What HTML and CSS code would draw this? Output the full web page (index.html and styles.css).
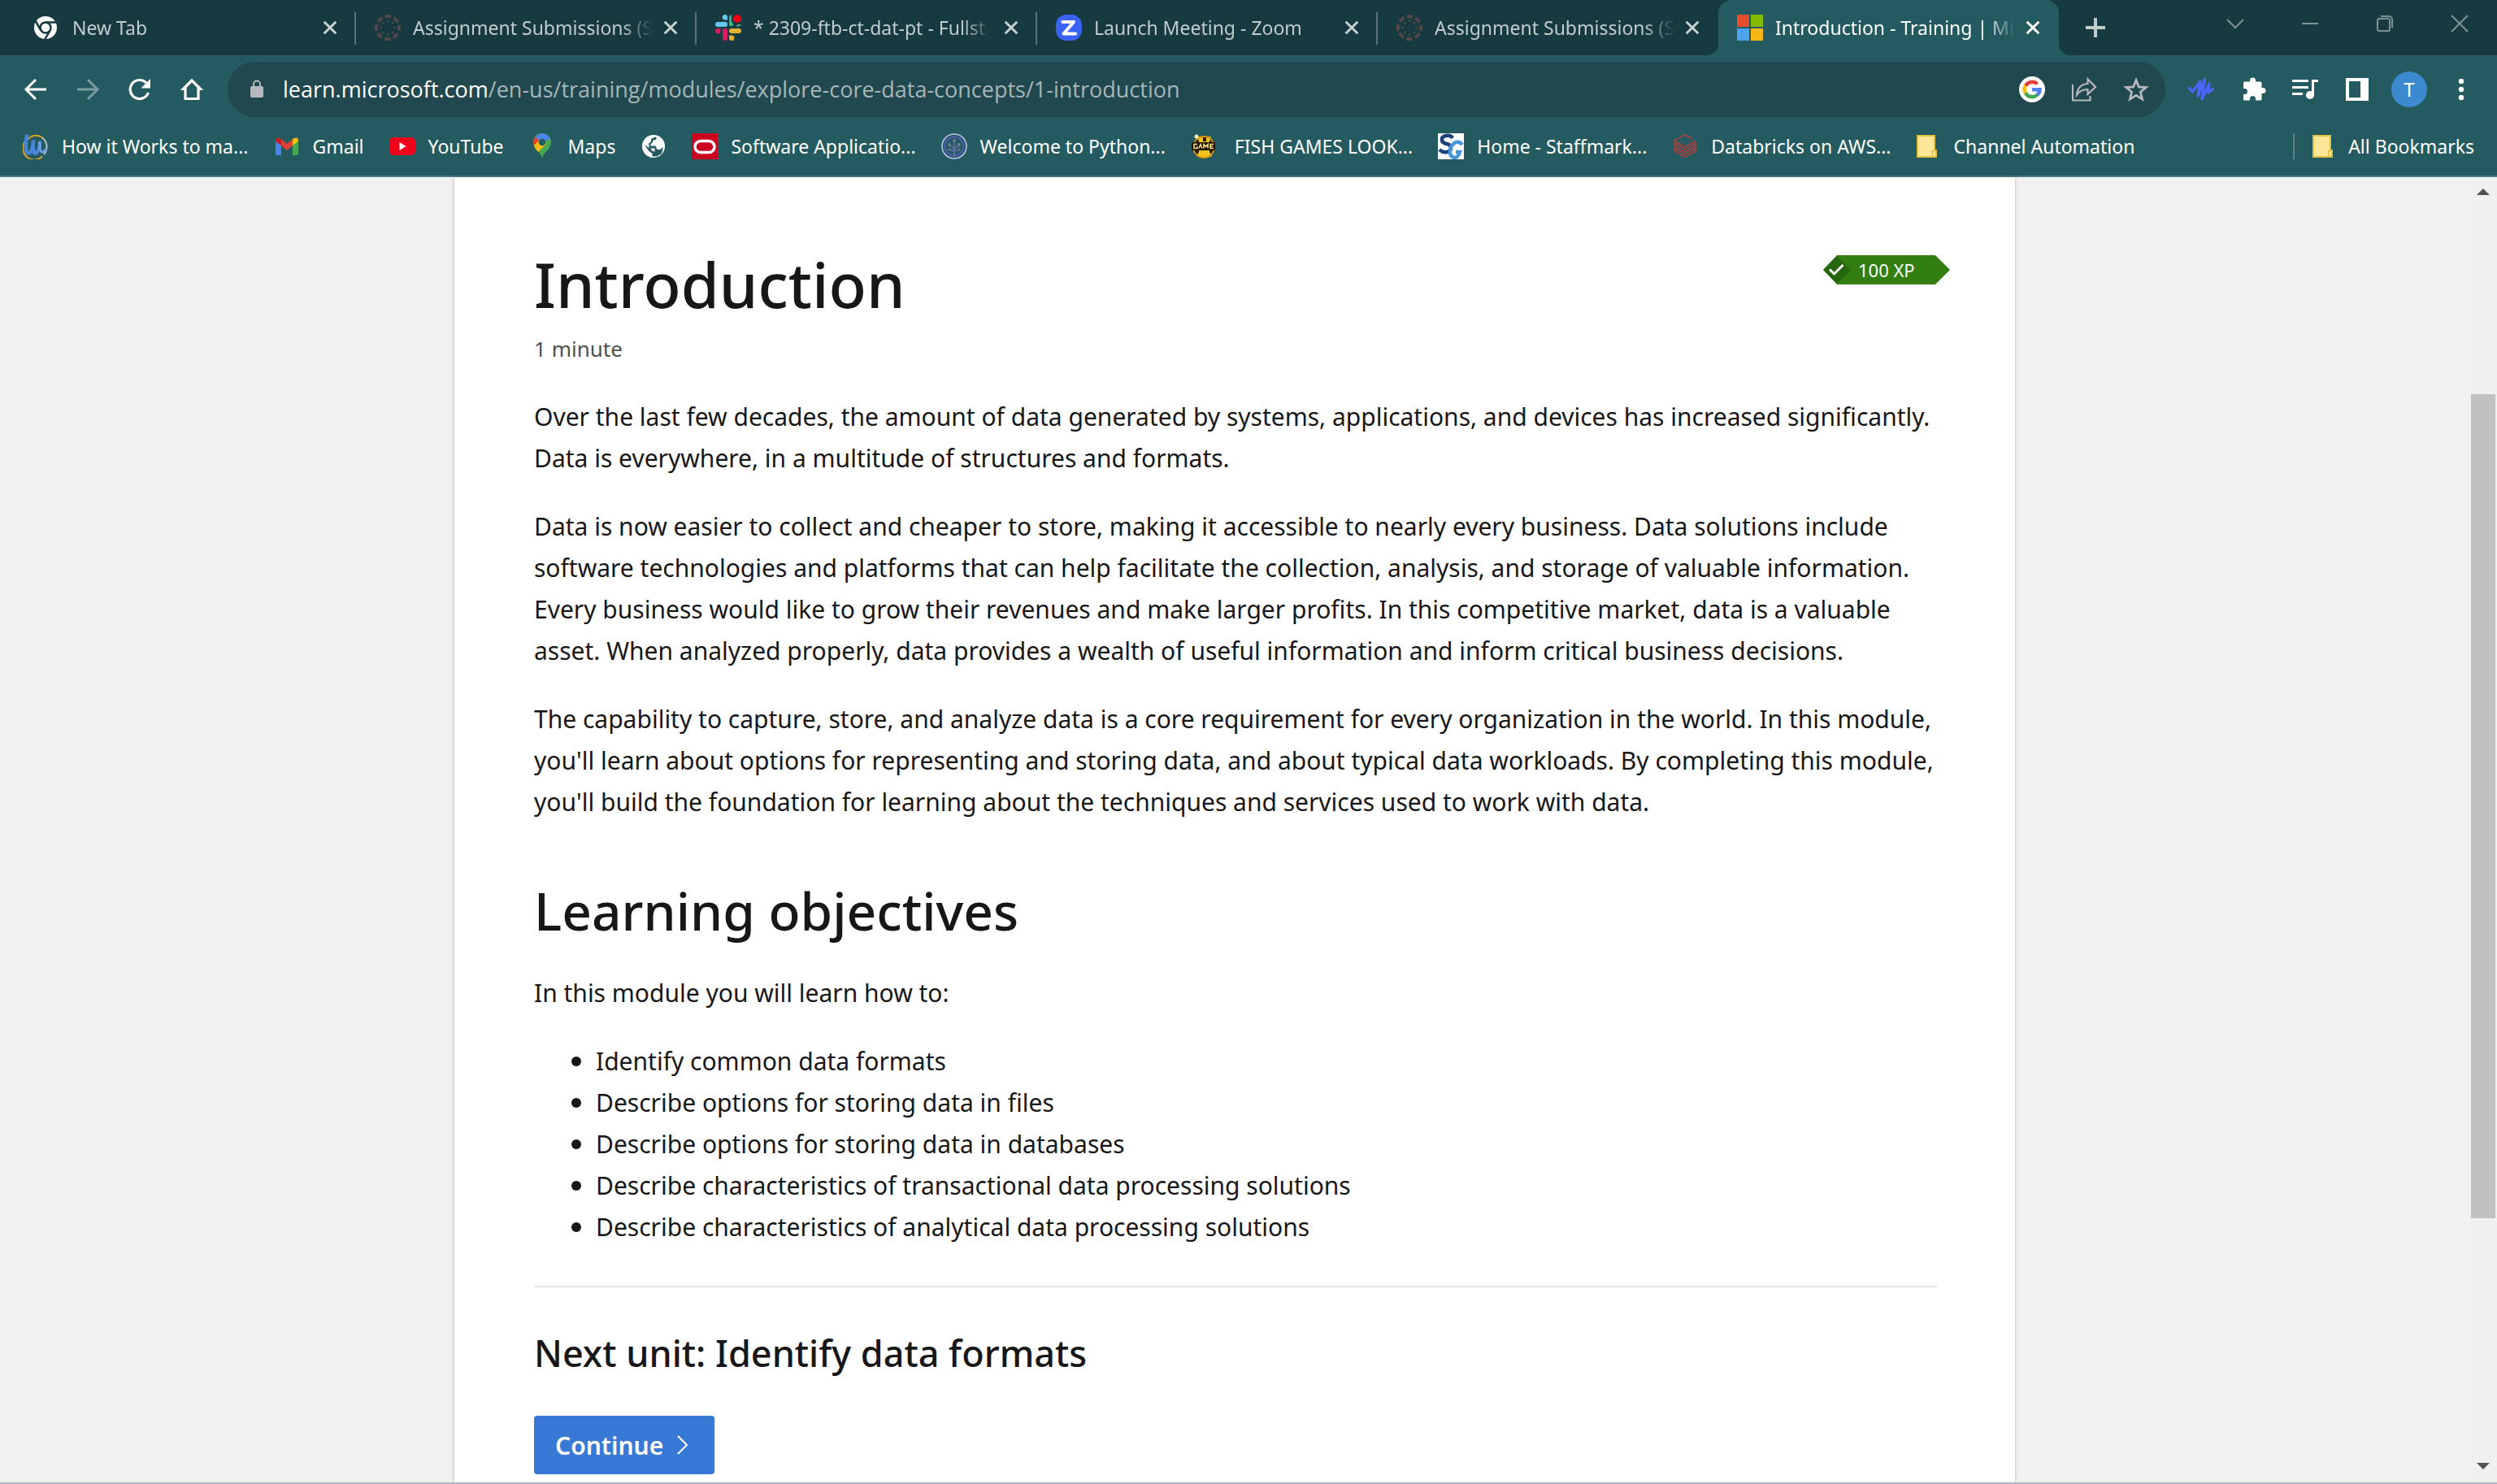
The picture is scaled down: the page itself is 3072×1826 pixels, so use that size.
FILE: index.html
```html
<!DOCTYPE html>
<html lang="en">
<head>
<meta charset="utf-8">
<title>Introduction - Training | Microsoft Learn</title>
<link rel="stylesheet" href="styles.css">
</head>
<body>
<svg class="defs" aria-hidden="true">
  <defs>
    <symbol id="close" viewBox="0 0 16 16"><path d="M1.5 1.5l13 13M14.5 1.5l-13 13" fill="none" stroke="currentColor" stroke-width="2.6"/></symbol>
    <symbol id="canvas" viewBox="0 0 32 32">
      <circle cx="16" cy="16" r="14" fill="none" stroke="#54484a" stroke-width="4" stroke-dasharray="7.4 3.6" stroke-dashoffset="3.7"/>
      <g fill="#54484a"><circle cx="16" cy="7.5" r="1.3"/><circle cx="22" cy="10" r="1.3"/><circle cx="24.500" cy="16" r="1.3"/><circle cx="22" cy="22" r="1.3"/><circle cx="16" cy="24.500" r="1.3"/><circle cx="10" cy="22" r="1.3"/><circle cx="7.5" cy="16" r="1.3"/><circle cx="10" cy="10" r="1.3"/></g>
    </symbol>
    <symbol id="folder" viewBox="0 0 30 28"><path d="M1 1h21v18h2v8H1z" fill="#fce697" stroke="#e3bf3f" stroke-width="2"/><path d="M19.500 26v-6.500h4" fill="none" stroke="#e3bf3f" stroke-width="1.500"/></symbol>
  </defs>
</svg>

<header class="browser">
  <div class="tabstrip">
    <div class="tab">
      <svg class="fav" viewBox="0 0 32 32"><circle cx="14" cy="16" r="14" fill="#fff"/><circle cx="14" cy="16" r="6.500" fill="#fff" stroke="#173940" stroke-width="2.500"/><path d="M14 9.500h14M8.500 19.500L1.500 7.500M19.500 19.500L13 31" stroke="#173940" stroke-width="2.500" fill="none"/></svg>
      <span class="title">New Tab</span>
      <button class="x" aria-label="Close tab"><svg><use href="#close"/></svg></button>
    </div>
    <div class="tab">
      <svg class="fav"><use href="#canvas"/></svg>
      <span class="title">Assignment Submissions (S</span>
      <button class="x" aria-label="Close tab"><svg><use href="#close"/></svg></button>
    </div>
    <div class="tab">
      <svg class="fav" viewBox="0 0 32 32"><g fill="#63c7ee"><rect x="0" y="9" width="15" height="6" rx="3"/><path d="M12 0a3 3 0 0 1 3 3v3.500h-3A3.200 3.200 0 0 1 12 0z"/></g><g fill="#3bb281"><path d="M17 3a4 4 0 0 1 3-3v8l2.500 4v0a3 3 0 0 1-5.500 1z"/><path d="M25 14.500c2 0 6 .5 7-2.500h-4z"/></g><g fill="#dc1a5f"><rect x="9" y="17" width="6" height="15" rx="3"/><path d="M6.500 17v3A3.200 3.200 0 1 1 3.300 17z"/></g><g fill="#e6b230"><rect x="17" y="17" width="15" height="6" rx="3"/><path d="M17 25.500h3.200A3.200 3.200 0 1 1 17 28.700z"/></g><circle cx="27" cy="5" r="5" fill="#eb0014"/></svg>
      <span class="title">* 2309-ftb-ct-dat-pt - Fullst</span>
      <button class="x" aria-label="Close tab"><svg><use href="#close"/></svg></button>
    </div>
    <div class="tab">
      <svg class="fav" viewBox="0 0 32 32"><rect width="32" height="32" rx="13" fill="#3b63f8"/><path d="M8.500 9H22L9.500 23.500H24" fill="none" stroke="#fff" stroke-width="4" stroke-linejoin="round" stroke-linecap="round"/></svg>
      <span class="title">Launch Meeting - Zoom</span>
      <button class="x" aria-label="Close tab"><svg><use href="#close"/></svg></button>
    </div>
    <div class="tab last">
      <svg class="fav"><use href="#canvas"/></svg>
      <span class="title">Assignment Submissions (S</span>
      <button class="x" aria-label="Close tab"><svg><use href="#close"/></svg></button>
    </div>
    <div class="tab active">
      <svg class="fav" viewBox="0 0 32 32"><path d="M0 0h15v15H0z" fill="#e34c2c"/><path d="M17 0h15v15H17z" fill="#83b900"/><path d="M0 17h15v15H0z" fill="#4ba3ee"/><path d="M17 17h15v15H17z" fill="#f5b616"/></svg>
      <span class="title">Introduction - Training | Mi</span>
      <button class="x" aria-label="Close tab"><svg><use href="#close"/></svg></button>
    </div>
    <button class="newtab" aria-label="New tab"><svg viewBox="0 0 24 24"><path d="M12 0v24M0 12h24" stroke="currentColor" stroke-width="4"/></svg></button>
    <div class="window-controls">
      <button aria-label="Search tabs"><svg viewBox="0 0 20 20"><path d="M0 5l10 10L20 5"/></svg></button>
      <button aria-label="Minimize"><svg viewBox="0 0 20 20"><path d="M0 10h20"/></svg></button>
      <button aria-label="Restore"><svg viewBox="0 0 20 20"><rect x="1" y="4" width="15" height="15" rx="2"/><path d="M5 1h10a4 4 0 0 1 4 4v10"/></svg></button>
      <button aria-label="Close window"><svg viewBox="0 0 20 20"><path d="M0 0l20 20M20 0L0 20"/></svg></button>
    </div>
  </div>

  <div class="toolbar">
    <button class="tool" aria-label="Back"><svg viewBox="0 0 32 32"><path d="M29 16H5M16 4L4 16l12 12" fill="none" stroke="#fff" stroke-width="3"/></svg></button>
    <button class="tool" aria-label="Forward"><svg viewBox="0 0 32 32"><path d="M3 16h24M16 4l12 12-12 12" fill="none" stroke="#7c9da0" stroke-width="3"/></svg></button>
    <button class="tool" aria-label="Reload"><svg viewBox="0 0 32 32"><path d="M26.500 20A11.500 11.500 0 1 1 24 8" fill="none" stroke="#fff" stroke-width="3.200"/><path d="M29 3v11.500H17.500z" fill="#fff"/></svg></button>
    <button class="tool" aria-label="Home"><svg viewBox="0 0 32 32"><path d="M16 5L5.500 15.500H8V27.500H24V15.500H26.500z" fill="none" stroke="#fff" stroke-width="3.200"/></svg></button>
    <div class="omnibox">
      <svg class="lock" viewBox="0 0 18 24"><rect x="1" y="8" width="16" height="14" rx="2" fill="#b5b8bc"/><path d="M5 9V5.500a4 4 0 0 1 8 0V9" fill="none" stroke="#b5b8bc" stroke-width="2"/></svg>
      <p class="url"><strong>learn.microsoft.com</strong>/en-us/training/modules/explore-core-data-concepts/1-introduction</p>
      <button class="tool" aria-label="Google"><svg viewBox="0 0 32 32"><circle cx="16" cy="16" r="16" fill="#fff"/><g fill="none" stroke-width="4.500"><path d="M8 11.500a9.500 9.500 0 0 1 14.500-2.200" stroke="#e04134"/><path d="M8 20.800a9.500 9.500 0 0 1 0-9.600" stroke="#f7bc10"/><path d="M22.500 22.700A9.500 9.500 0 0 1 8 20.500" stroke="#46a850"/><path d="M16 16.300h9.500a9.500 9.500 0 0 1-3.200 6.600" stroke="#4b83f0"/></g></svg></button>
      <button class="tool" aria-label="Share"><svg viewBox="0 0 32 32"><path d="M2 10v19.500h21.500V24" fill="none" stroke="#b5b8bc" stroke-width="2.200"/><path d="M7 22.500C8 13 13 9.500 20.500 9V3.500L30 13l-9.500 9v-6C14.500 16 10.500 17.500 7 22.500z" fill="none" stroke="#b5b8bc" stroke-width="2.200"/></svg></button>
      <button class="tool" aria-label="Bookmark this tab"><svg viewBox="0 0 32 32"><path d="M16 4.500l3.300 8.300 9 .7-6.900 5.800 2.200 8.700L16 23.300 8.400 28l2.200-8.700-6.900-5.800 9-.7z" fill="none" stroke="#b5b8bc" stroke-width="2.800"/></svg></button>
    </div>
    <button class="tool" aria-label="Audio extension"><svg viewBox="0 0 32 32"><path d="M1.500 14.500L5.500 19 15 6 12 24.500 20.500 3.500 17 28 26 9 24.500 20 30.500 15.500" fill="none" stroke="#4d63fb" stroke-width="3.200" stroke-linejoin="round" stroke-linecap="round"/></svg></button>
    <button class="tool" aria-label="Extensions"><svg viewBox="0 0 32 32"><path d="M4 8q0-1.500 1.500-1.500H12V5a3.500 3.500 0 0 1 7 0v1.500h6q1.500 0 1.500 1.500v6h1.500a3.500 3.500 0 0 1 0 7h-1.500v7q0 1.500-1.500 1.500h-6V27.500a3.500 3.500 0 0 0-7 0v2H5.500Q4 29.500 4 28v-6h1.500a3.500 3.500 0 0 0 0-7H4z" fill="#fff"/></svg></button>
    <button class="tool" aria-label="Media controls"><svg viewBox="0 0 32 32"><path d="M0 5.500h20M0 13.500h20M0 21.500h13" stroke="#fff" stroke-width="3"/><path d="M32 5.500h-6.500V23" fill="none" stroke="#fff" stroke-width="3"/><circle cx="22" cy="23" r="5" fill="#fff"/></svg></button>
    <button class="tool" aria-label="Side panel"><svg viewBox="0 0 32 32"><path d="M2 2h28v28H2zM6 6v20h14V6z" fill="#fff" fill-rule="evenodd"/></svg></button>
    <button class="avatar" aria-label="Profile">T</button>
    <button class="tool" aria-label="Menu"><svg viewBox="0 0 32 32"><g fill="#fff"><circle cx="16" cy="6" r="3.200"/><circle cx="16" cy="16" r="3.200"/><circle cx="16" cy="26" r="3.200"/></g></svg></button>
  </div>

  <nav class="bookmarks" aria-label="Bookmarks">
    <a href="#"><svg viewBox="0 0 32 32"><path d="M9 5.500A14 14 0 1 0 24 28.500M9 5Q17 0 25 6" fill="none" stroke="#d9a11f" stroke-width="2"/><path d="M24 5.500A14 14 0 0 1 26 26" fill="none" stroke="#b9bfc5" stroke-width="2"/><path d="M5.500 1.500C3 12 3 24 6.500 24.500S13 17 13 8.500C12 16 12.500 24 15.500 24.500S21 17 21 10" fill="none" stroke="#4a86d8" stroke-width="4.500"/><path d="M21 10C20.500 18 21.500 23 24 23q3 0 5-4" fill="none" stroke="#6ba0df" stroke-width="3"/></svg>How it Works to ma...</a>
    <a href="#"><svg viewBox="0 0 32 32"><path d="M2 9v16q0 2 2 2h5V14z" fill="#4b83f0"/><path d="M30 9v16q0 2-2 2h-5V14z" fill="#46a850"/><path d="M9 7l7 6 7-6v8l-7 6-7-6z" fill="#e04134"/><path d="M2 9q0-5 5-3l2 1.500V15l-7-5z" fill="#bf1f20"/><path d="M30 9q0-5-5-3l-2 1.500V15l7-5z" fill="#f7bc10"/></svg>Gmail</a>
    <a href="#"><svg viewBox="0 0 32 32"><rect y="5" width="32" height="22" rx="5" fill="#f1001b"/><path d="M12.500 11v10l8-5z" fill="#fff"/></svg>YouTube</a>
    <a href="#"><svg viewBox="0 0 32 32"><path d="M16 31C15 23 5 20 5 11a11 11 0 0 1 22 0c0 9-10 12-11 20z" fill="#46a850"/><path d="M6 15.500a11 11 0 0 1 1.500-11L13 9z" fill="#e04134"/><path d="M7.500 4.500A11 11 0 0 1 26 6.500L16 11z" fill="#4b83f0"/><path d="M6 15q1 4 5 8L21 13l-7-6z" fill="#f7bc10"/><circle cx="16" cy="11" r="4.200" fill="#245b60"/></svg>Maps</a>
    <a href="#" aria-label="Site"><svg viewBox="0 0 32 32"><circle cx="16" cy="16" r="14" fill="#fff"/><path d="M18.500 4.500L20 5.500Q19 9 15.500 8.500L14.500 12 12.500 13v2.500h6L20.500 20H24l4-3-2 8-6 3.500h-5.500V25L10.500 22 5 14.500 13 19l1 2.500 3.500 1v-4H11L10 12.500 12.500 11 13.500 6.500z" fill="#245b60"/></svg></a>
    <a href="#"><svg viewBox="0 0 32 32"><path d="M0 0h32v32H0z" fill="#cb0020"/><rect x="4" y="9.500" width="24" height="14" rx="7" fill="none" stroke="#fff" stroke-width="3.500"/></svg>Software Applicatio...</a>
    <a href="#"><svg viewBox="0 0 32 32"><circle cx="16" cy="16" r="15" fill="none" stroke="#bfc3ee" stroke-width="1.500"/><circle cx="16" cy="16" r="11.500" fill="none" stroke="#5f5cc8" stroke-width="1.500"/><path d="M16 29V10M16 19l-5-4M16 19l5-4M10 20l6 2 6-2" stroke="#6b6fb0" stroke-width="1.600" fill="none"/><g fill="#6b7f98"><circle cx="16" cy="9" r="2"/><circle cx="10" cy="14" r="2"/><circle cx="22" cy="14" r="2"/><circle cx="10" cy="20" r="1.600"/><circle cx="22" cy="20" r="1.600"/></g></svg>Welcome to Python...</a>
    <a href="#"><svg viewBox="0 0 32 32"><circle cx="16" cy="17" r="14" fill="#2a1b08"/><path d="M8 4h7v6h4V4h6l-2 6v13l3 5q-10 5-19 0l3-5V10z" fill="#f2c318"/><circle cx="16" cy="17" r="13" fill="none" stroke="#d99c12" stroke-width="1.800"/><rect x="1" y="11" width="29" height="10" rx="2" fill="#1d1206"/><path d="M8 13.500H4v5h4V16M10 18.500l2-5 2 5M16 18.500v-5l2.500 3 2.500-3v5M28 13.500h-4v5h4M24 16h3" fill="none" stroke="#f6e27a" stroke-width="1.500"/><circle cx="7" cy="4" r="2.500" fill="#f9f0c0"/></svg><span class="caption">FISH GAMES LOOK...</span></a>
    <a href="#"><svg viewBox="0 0 32 32"><path d="M0 0h32v32H0z" fill="#fff"/><path d="M18 6Q16 2 10 3T5 9q1 3 6 4t5 5-5 5-9-3" fill="none" stroke="#1b3f7b" stroke-width="4.500"/><path d="M30 14q-3-4-8-3-6 3-7 10t5 9q5 0 7-7h-5" fill="none" stroke="#4697db" stroke-width="4.500"/></svg>Home - Staffmark...</a>
    <a href="#"><svg viewBox="0 0 32 32"><path d="M25 6.500L16 2 3 9l13 7.500L29 9M3 12v3.500l13 7.500 13-7.500V12l-13 7.500zM3 18.500V22l13 7.500L29 22v-3.500L16 26z" fill="none" stroke="#c93a3a" stroke-width="1.400"/></svg>Databricks on AWS...</a>
    <a href="#"><svg class="folder"><use href="#folder"/></svg>Channel Automation</a>
    <a href="#" class="all"><svg class="folder"><use href="#folder"/></svg>All Bookmarks</a>
  </nav>
</header>

<div class="viewport">
  <main class="card">
    <div class="heading">
      <h1>Introduction</h1>
      <div class="xp">
        <svg viewBox="0 0 34 36"><path d="M0 18L17 1l17 17-17 17z" fill="#28650f"/><path d="M8 17.500l5.500 5.500L24.500 12" fill="none" stroke="#fff" stroke-width="3"/></svg>
        <span>100 XP</span>
      </div>
    </div>
    <p class="time">1 minute</p>
    <p>Over the last few decades, the amount of data generated by systems, applications, and devices has increased significantly. Data is everywhere, in a multitude of structures and formats.</p>
    <p>Data is now easier to collect and cheaper to store, making it accessible to nearly every business. Data solutions include software technologies and platforms that can help facilitate the collection, analysis, and storage of valuable information. Every business would like to grow their revenues and make larger profits. In this competitive market, data is a valuable asset. When analyzed properly, data provides a wealth of useful information and inform critical business decisions.</p>
    <p>The capability to capture, store, and analyze data is a core requirement for every organization in the world. In this module, you'll learn about options for representing and storing data, and about typical data workloads. By completing this module, you'll build the foundation for learning about the techniques and services used to work with data.</p>
    <h2>Learning objectives</h2>
    <p>In this module you will learn how to:</p>
    <ul>
      <li>Identify common data formats</li>
      <li>Describe options for storing data in files</li>
      <li>Describe options for storing data in databases</li>
      <li>Describe characteristics of transactional data processing solutions</li>
      <li>Describe characteristics of analytical data processing solutions</li>
    </ul>
    <hr>
    <h3>Next unit: Identify data formats</h3>
    <a class="continue" href="#">Continue <svg viewBox="0 0 14 24"><path d="M1 1l11 11L1 23" fill="none" stroke="#fff" stroke-width="2"/></svg></a>
  </main>
  <div class="scrollbar" aria-hidden="true">
    <svg viewBox="0 0 16 8"><path d="M0 8l8-8 8 8z" fill="#505050"/></svg>
    <div class="track"><div class="thumb"></div></div>
    <svg viewBox="0 0 16 8"><path d="M0 0l8 8 8-8z" fill="#505050"/></svg>
  </div>
</div>
</body>
</html>
```
FILE: styles.css
```css
* { box-sizing: border-box; margin: 0; padding: 0; }

body {
  display: flex;
  flex-direction: column;
  height: 100vh;
  overflow: hidden;
  font-family: "Noto Sans", "Open Sans", sans-serif;
  font-size: 30px;
  line-height: 51px;
  color: #171717;
  background: #f1f1f1;
  border-bottom: 2px solid #b0b2c6;
}

button { border: 0; background: none; font: inherit; color: inherit; }
a { color: inherit; text-decoration: none; }
svg { display: block; flex: none; }
.defs { position: absolute; width: 0; height: 0; }

.browser {
  flex: none;
  background: #245b60;
  border-bottom: 2px solid #4a8085;
  color: #fff;
  font-size: 23px;
  line-height: 32px;
}

/* Tab strip */
.tabstrip {
  display: flex;
  height: 68px;
  padding-left: 19px;
  background: #173940;
}
.tab {
  position: relative;
  display: flex;
  align-items: center;
  flex: 0 1 419px;
  min-width: 0;
  padding: 0 23px;
  color: #c0cccd;
}
.tab::after {
  content: "";
  position: absolute;
  right: 0;
  top: 15px;
  width: 2px;
  height: 40px;
  background: #5a7478;
}
.tab.last::after { display: none; }
.fav { width: 32px; height: 32px; }
.title {
  flex: 1;
  min-width: 0;
  margin: 0 12px 0 15px;
  overflow: hidden;
  white-space: nowrap;
  mask-image: linear-gradient(to left, transparent, #000 40px);
}
.x { width: 18px; height: 18px; color: #c8d2d3; }
.x svg { width: 18px; height: 18px; }
.tab.active { background: #245b60; color: #fff; border-radius: 16px 16px 0 0; }
.tab.active .x { color: #fff; }
.tab.active::before,
.tab.active::after {
  content: "";
  position: absolute;
  top: auto;
  bottom: 0;
  width: 16px;
  height: 16px;
}
.tab.active::before { left: -16px; background: radial-gradient(circle at 0 0, transparent 16px, #245b60 17px); }
.tab.active::after { right: -16px; background: radial-gradient(circle at 100% 0, transparent 16px, #245b60 17px); }
.newtab { width: 24px; margin-left: 33px; color: #c0cccd; }
.newtab svg { width: 24px; height: 24px; }
.window-controls { display: flex; height: 58px; margin-left: auto; }
.window-controls button { display: grid; place-items: center; width: 92px; }
.window-controls svg { width: 20px; height: 20px; fill: none; stroke: #7f9497; stroke-width: 2; overflow: visible; }

/* Toolbar */
.toolbar { display: flex; align-items: center; height: 84px; padding: 0 12px; }
.tool { display: grid; place-items: center; flex: none; width: 64px; height: 64px; }
.tool svg { width: 32px; height: 32px; }
.omnibox {
  display: flex;
  align-items: center;
  flex: 1;
  min-width: 0;
  height: 68px;
  margin: 0 12px;
  padding: 0 4px 0 27px;
  border-radius: 34px;
  background: #20484e;
}
.lock { width: 18px; height: 24px; }
.url {
  flex: 1;
  min-width: 0;
  margin-left: 23px;
  overflow: hidden;
  white-space: nowrap;
  font-family: "Open Sans", sans-serif;
  font-size: 27px;
  line-height: 40px;
  color: #a6b6b8;
}
.url strong { font-weight: 400; color: #fff; }
.avatar {
  flex: none;
  width: 44px;
  height: 44px;
  margin: 0 10px;
  border-radius: 50%;
  background: #3c89d0;
  font-size: 24px;
}

/* Bookmarks bar */
.bookmarks { display: flex; align-items: center; gap: 31px; height: 56px; padding: 0 28px; margin-bottom: 8px; }
.bookmarks a { display: flex; align-items: center; gap: 16px; height: 32px; white-space: nowrap; }
.bookmarks svg { width: 32px; height: 32px; }
.bookmarks .folder { width: 30px; height: 28px; }
.bookmarks .caption { padding-left: 6px; }
.bookmarks .all { gap: 14px; margin-left: auto; padding-left: 22px; border-left: 2px solid #5b8488; }

/* Page */
.viewport { display: flex; flex: 1; min-height: 0; }
.card {
  width: 1920px;
  max-width: 100%;
  margin: 0 auto;
  padding: 84px 96px 10px 98px;
  background: #fff;
  box-shadow: 0 0 4px rgba(0, 0, 0, 0.25);
}
.heading { display: flex; justify-content: space-between; align-items: flex-start; margin-right: -16px; }
h1 { font-size: 76px; line-height: 96px; font-weight: 500; }
h2 { margin: 69px 0 35px; font-size: 64px; line-height: 80px; font-weight: 500; }
h3 { margin: 51px 0 47px; font-size: 45px; line-height: 60px; font-weight: 500; }
.card p + p { margin-top: 33px; }
.card .time { margin-top: 13px; font-size: 26px; line-height: 36px; color: #505050; }
.card .time + p { margin-top: 40px; }
.xp {
  display: flex;
  align-items: center;
  gap: 9px;
  width: 156px;
  height: 36px;
  margin-top: 12px;
  background: #327e10;
  clip-path: polygon(0 50%, 17px 0, calc(100% - 18px) 0, 100% 50%, calc(100% - 18px) 100%, 17px 100%);
  color: #fff;
  font-size: 22px;
  line-height: 36px;
}
.xp svg { width: 34px; height: 36px; }
ul { margin-top: 33px; padding-left: 76px; list-style: none; }
li { position: relative; }
li::before {
  content: "";
  position: absolute;
  left: -30px;
  top: 20px;
  width: 12px;
  height: 12px;
  border-radius: 50%;
  background: #171717;
}
hr { height: 2px; margin-top: 47px; border: 0; background: #e3e3e3; }
.continue {
  display: inline-flex;
  align-items: center;
  gap: 17px;
  height: 72px;
  padding: 0 32px 0 26px;
  border-radius: 4px;
  background: #3779d4;
  color: #fff;
  font-weight: 600;
}
.continue svg { width: 14px; height: 24px; }

/* Page scrollbar */
.scrollbar {
  display: flex;
  flex-direction: column;
  align-items: center;
  flex: none;
  width: 34px;
  padding: 14px 2px 16px;
  background: #f0f0f0;
}
.scrollbar svg { width: 16px; height: 8px; }
.track { display: flex; flex-direction: column; flex: 1; width: 100%; padding: 245px 0 301px; }
.thumb { flex: 1; background: #c1c1c1; }
```
